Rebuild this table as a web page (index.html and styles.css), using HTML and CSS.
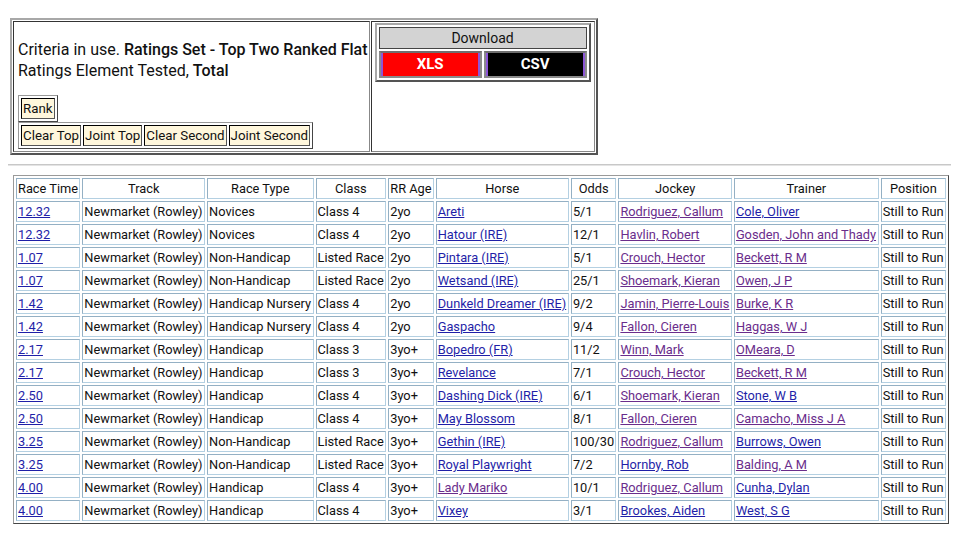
FILE: index.html
```html
<!DOCTYPE html>
<html>
<head>
<meta charset="utf-8">
<link rel="stylesheet" href="styles.css">
</head>
<body>
<div class="top-wrap">
<table class="criteria">
  <tr>
    <td class="crit-left">
      <p class="crit-text">Criteria in use. <b>Ratings Set - Top Two Ranked Flat</b><br>Ratings Element Tested, <b>Total</b></p>
      <table class="rank"><tr><td>Rank</td></tr></table>
      <table class="rank"><tr><td>Clear Top</td><td>Joint Top</td><td>Clear Second</td><td>Joint Second</td></tr></table>
    </td>
    <td class="crit-right">
      <table class="download">
        <tr><td colspan="2" class="dl-head">Download</td></tr>
        <tr>
          <td class="dl-btn"><div class="btn xls">XLS</div></td>
          <td class="dl-btn"><div class="btn csv">CSV</div></td>
        </tr>
      </table>
    </td>
  </tr>
</table>
</div>
<hr class="sep">
<div class="main-wrap">
<table class="races">
  <tr><th class="left">Race Time</th><th>Track</th><th>Race Type</th><th>Class</th><th>RR Age</th><th>Horse</th><th>Odds</th><th>Jockey</th><th>Trainer</th><th>Position</th></tr>
  <tr><td><a href="#">12.32</a></td><td>Newmarket (Rowley)</td><td>Novices</td><td>Class 4</td><td>2yo</td><td><a href="#">Areti</a></td><td>5/1</td><td><a class="v" href="#">Rodriguez, Callum</a></td><td><a href="#">Cole, Oliver</a></td><td>Still to Run</td></tr>
  <tr><td><a href="#">12.32</a></td><td>Newmarket (Rowley)</td><td>Novices</td><td>Class 4</td><td>2yo</td><td><a href="#">Hatour (IRE)</a></td><td>12/1</td><td><a class="v" href="#">Havlin, Robert</a></td><td><a class="v" href="#">Gosden, John and Thady</a></td><td>Still to Run</td></tr>
  <tr><td><a href="#">1.07</a></td><td>Newmarket (Rowley)</td><td>Non-Handicap</td><td>Listed Race</td><td>2yo</td><td><a href="#">Pintara (IRE)</a></td><td>5/1</td><td><a class="v" href="#">Crouch, Hector</a></td><td><a class="v" href="#">Beckett, R M</a></td><td>Still to Run</td></tr>
  <tr><td><a href="#">1.07</a></td><td>Newmarket (Rowley)</td><td>Non-Handicap</td><td>Listed Race</td><td>2yo</td><td><a href="#">Wetsand (IRE)</a></td><td>25/1</td><td><a class="v" href="#">Shoemark, Kieran</a></td><td><a class="v" href="#">Owen, J P</a></td><td>Still to Run</td></tr>
  <tr><td><a href="#">1.42</a></td><td>Newmarket (Rowley)</td><td>Handicap Nursery</td><td>Class 4</td><td>2yo</td><td><a href="#">Dunkeld Dreamer (IRE)</a></td><td>9/2</td><td><a class="v" href="#">Jamin, Pierre-Louis</a></td><td><a class="v" href="#">Burke, K R</a></td><td>Still to Run</td></tr>
  <tr><td><a href="#">1.42</a></td><td>Newmarket (Rowley)</td><td>Handicap Nursery</td><td>Class 4</td><td>2yo</td><td><a href="#">Gaspacho</a></td><td>9/4</td><td><a class="v" href="#">Fallon, Cieren</a></td><td><a class="v" href="#">Haggas, W J</a></td><td>Still to Run</td></tr>
  <tr><td><a href="#">2.17</a></td><td>Newmarket (Rowley)</td><td>Handicap</td><td>Class 3</td><td>3yo+</td><td><a href="#">Bopedro (FR)</a></td><td>11/2</td><td><a class="v" href="#">Winn, Mark</a></td><td><a class="v" href="#">OMeara, D</a></td><td>Still to Run</td></tr>
  <tr><td><a href="#">2.17</a></td><td>Newmarket (Rowley)</td><td>Handicap</td><td>Class 3</td><td>3yo+</td><td><a href="#">Revelance</a></td><td>7/1</td><td><a class="v" href="#">Crouch, Hector</a></td><td><a class="v" href="#">Beckett, R M</a></td><td>Still to Run</td></tr>
  <tr><td><a href="#">2.50</a></td><td>Newmarket (Rowley)</td><td>Handicap</td><td>Class 4</td><td>3yo+</td><td><a href="#">Dashing Dick (IRE)</a></td><td>6/1</td><td><a class="v" href="#">Shoemark, Kieran</a></td><td><a href="#">Stone, W B</a></td><td>Still to Run</td></tr>
  <tr><td><a href="#">2.50</a></td><td>Newmarket (Rowley)</td><td>Handicap</td><td>Class 4</td><td>3yo+</td><td><a href="#">May Blossom</a></td><td>8/1</td><td><a class="v" href="#">Fallon, Cieren</a></td><td><a class="v" href="#">Camacho, Miss J A</a></td><td>Still to Run</td></tr>
  <tr><td><a href="#">3.25</a></td><td>Newmarket (Rowley)</td><td>Non-Handicap</td><td>Listed Race</td><td>3yo+</td><td><a href="#">Gethin (IRE)</a></td><td>100/30</td><td><a class="v" href="#">Rodriguez, Callum</a></td><td><a href="#">Burrows, Owen</a></td><td>Still to Run</td></tr>
  <tr><td><a href="#">3.25</a></td><td>Newmarket (Rowley)</td><td>Non-Handicap</td><td>Listed Race</td><td>3yo+</td><td><a href="#">Royal Playwright</a></td><td>7/2</td><td><a href="#">Hornby, Rob</a></td><td><a class="v" href="#">Balding, A M</a></td><td>Still to Run</td></tr>
  <tr><td><a href="#">4.00</a></td><td>Newmarket (Rowley)</td><td>Handicap</td><td>Class 4</td><td>3yo+</td><td><a class="v" href="#">Lady Mariko</a></td><td>10/1</td><td><a class="v" href="#">Rodriguez, Callum</a></td><td><a href="#">Cunha, Dylan</a></td><td>Still to Run</td></tr>
  <tr><td><a href="#">4.00</a></td><td>Newmarket (Rowley)</td><td>Handicap</td><td>Class 4</td><td>3yo+</td><td><a href="#">Vixey</a></td><td>3/1</td><td><a href="#">Brookes, Aiden</a></td><td><a href="#">West, S G</a></td><td>Still to Run</td></tr>
</table>
</div>
</body>
</html>
```
FILE: styles.css
```css
html, body {
  background: #ffffff;
}
body {
  margin: 8px;
  font-family: Roboto, "Liberation Sans", sans-serif;
  color: #111;
}
.top-wrap {
  padding: 10px 0 0 2px;
}
table {
  font-size: 13px;
}
.criteria {
  border: 2px outset #a8a8a8;
  border-spacing: 1px;
}
.criteria > tbody > tr > td {
  border: 1px inset #888;
}
.crit-left {
  vertical-align: top;
  padding: 17px 1px 2px 4px;
}
.crit-text {
  margin: 0 0 14px 0;
  font-size: 16px;
  line-height: 21px;
  white-space: nowrap;
}
.crit-text b {
  font-weight: 500;
}
.rank {
  border: 1px outset #999;
  border-spacing: 2px;
  margin: 0;
}
.rank td {
  background: #fff7dc;
  border: 1px inset #555;
  padding: 1px 1px;
  font-size: 13.3px;
  line-height: 17px;
  white-space: nowrap;
}
.crit-right {
  vertical-align: top;
  padding: 1px 3px 3px 3px;
  width: 216px;
}
.download {
  width: 216px;
  border: 2px outset #a8a8a8;
  border-spacing: 2px;
}
.dl-head {
  background: #d3d3d3;
  border: 1px solid #444;
  text-align: center;
  font-size: 14px;
  line-height: 20px;
  padding: 0;
}
.dl-btn {
  padding: 0;
  border: 2px solid #8a8a8a;
  border-top-color: #6f6f6f;
  width: 50%;
}
.btn {
  border-left: 2px solid #8d56d6;
  border-right: 2px solid #8d56d6;
  color: #fff;
  font-weight: 700;
  font-size: 15px;
  text-align: center;
  line-height: 23px;
}
.xls {
  background: #ff0000;
}
.csv {
  background: #000000;
}
.sep {
  margin: 9px 0 0 0;
  width: calc(100% + 8px);
  border: 0;
  border-top: 1px solid #c8c8c8;
  border-bottom: 1px solid #e4e4e4;
}
.main-wrap {
  padding: 9px 0 0 5px;
}
.races {
  width: 936px;
  border: 1px outset #9a9a9a;
  border-spacing: 2px;
}
.races th,
.races td {
  border: 1px solid #b4d0e2;
  border-top-color: #94b0c4;
  border-left-color: #94b0c4;
  padding: 1px 1px;
  font-size: 12.8px;
  line-height: 17px;
  white-space: nowrap;
  text-align: left;
  font-weight: 400;
}
.races th {
  text-align: center;
}
.races th.left {
  text-align: left;
}
.races a {
  color: #1f1fa8;
  text-decoration: underline;
}
.races a.v {
  color: #6a2d8c;
}
```
